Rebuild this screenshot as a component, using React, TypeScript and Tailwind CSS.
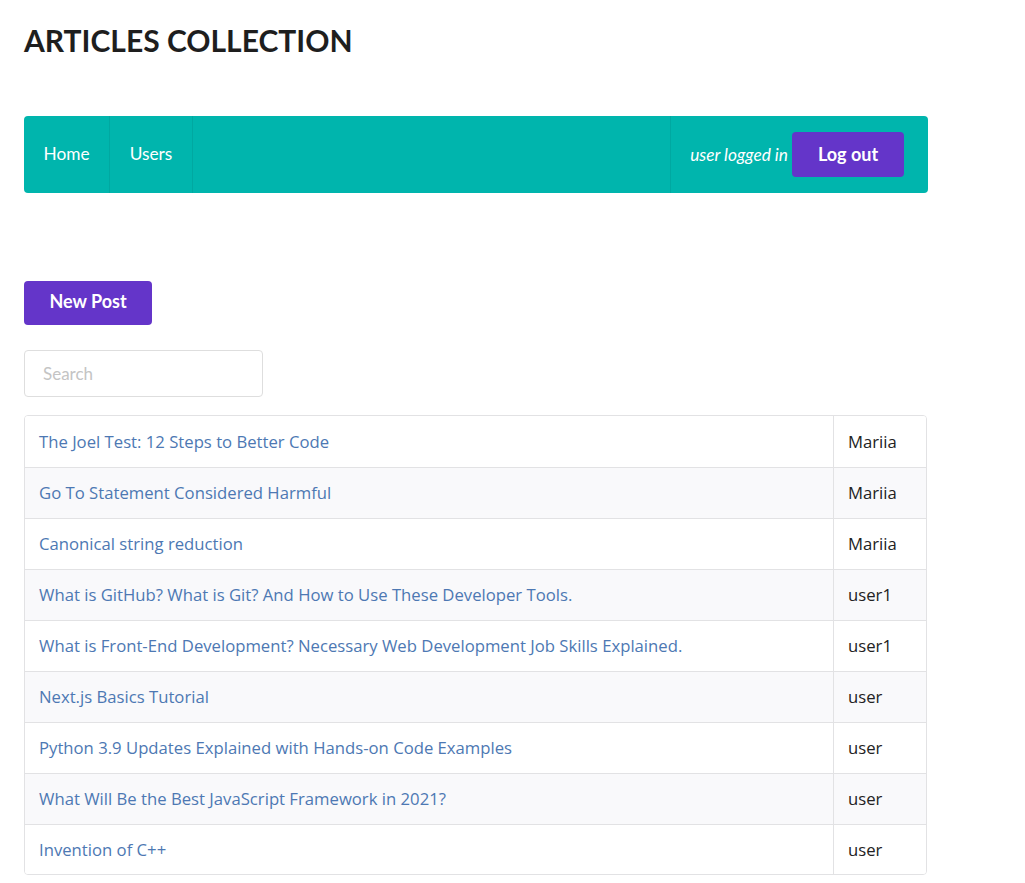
import React from "react";

const rows: [string, string][] = [
  ["The Joel Test: 12 Steps to Better Code", "Mariia"],
  ["Go To Statement Considered Harmful", "Mariia"],
  ["Canonical string reduction", "Mariia"],
  ["What is GitHub? What is Git? And How to Use These Developer Tools.", "user1"],
  ["What is Front-End Development? Necessary Web Development Job Skills Explained.", "user1"],
  ["Next.js Basics Tutorial", "user"],
  ["Python 3.9 Updates Explained with Hands-on Code Examples", "user"],
  ["What Will Be the Best JavaScript Framework in 2021?", "user"],
  ["Invention of C++", "user"],
];

export default function App() {
  return (
    <div className="min-h-screen bg-white px-6" style={{ fontFamily: "Lato, 'Liberation Sans', sans-serif" }}>
      <div className="w-[904px]">
        <h1 className="pt-[21px] text-[30px] font-bold leading-[38px] text-[#1e1e1e]">ARTICLES COLLECTION</h1>
        <nav className="mt-[57px] flex h-[77px] items-stretch rounded-[4px] bg-[#00b5ad] text-[17.3px] text-white">
          <a className="flex w-[86px] items-center justify-center border-r border-[#00a8a1] pb-[1px]">Home</a>
          <a className="flex w-[83px] items-center justify-center border-r border-[#00a8a1] pb-[1px]">Users</a>
          <div className="flex-1" />
          <div className="flex items-center border-l border-[#00a8a1] pl-[19px] pr-[24px]">
            <span className="italic">user logged in</span>
            <button className="ml-[4px] h-[45px] w-[112px] rounded-[4px] bg-[#6435c9] pb-[1px] text-[18px] font-bold text-white">Log out</button>
          </div>
        </nav>
        <button className="mt-[88px] h-[44px] w-[128px] rounded-[4px] bg-[#6435c9] pb-[3px] text-[18px] font-bold text-white">New Post</button>
        <div className="mt-[25px]">
          <input
            placeholder="Search"
            className="h-[47px] w-[239px] rounded-[4px] border border-[#dedede] px-[18px] pb-[1px] text-[17px] text-[#333] outline-none placeholder:text-[#c4c4c4]"
          />
        </div>
        <div
          className="mt-[18px] w-[903px] overflow-hidden rounded-[4px] border border-[#e2e2e4]"
          style={{ fontFamily: "'Open Sans', 'Noto Sans', sans-serif" }}
        >
          {rows.map(([title, user], i) => (
            <div
              key={i}
              className={`flex ${i === rows.length - 1 ? "h-[50px]" : "h-[51px]"} items-center ${i > 0 ? "border-t border-[#e2e2e4]" : ""} ${i % 2 === 1 ? "bg-[#f9f9fb]" : "bg-white"}`}
            >
              <div className="flex h-full flex-1 items-center px-[14px] text-[16.7px] text-[#4d78b3]">{title}</div>
              <div className="flex h-full w-[93px] items-center border-l border-[#e2e2e4] px-[14px] text-[16.7px] text-[#222]">{user}</div>
            </div>
          ))}
        </div>
      </div>
    </div>
  );
}
